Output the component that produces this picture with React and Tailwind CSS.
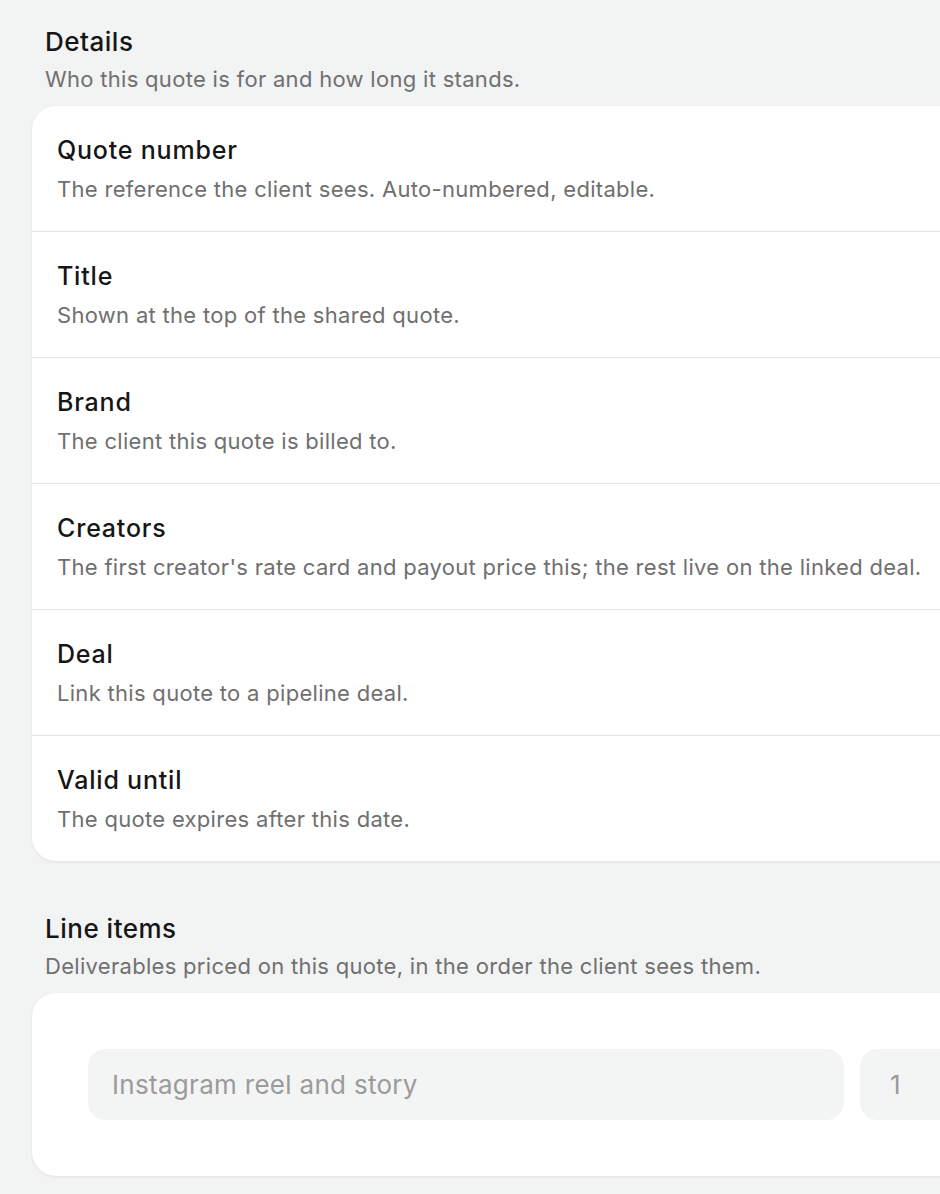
import React from "react";

const details = [
  { title: "Quote number", desc: "The reference the client sees. Auto-numbered, editable." },
  { title: "Title", desc: "Shown at the top of the shared quote." },
  { title: "Brand", desc: "The client this quote is billed to." },
  {
    title: "Creators",
    desc: "The first creator's rate card and payout price this; the rest live on the linked deal.",
  },
  { title: "Deal", desc: "Link this quote to a pipeline deal." },
  { title: "Valid until", desc: "The quote expires after this date." },
];

const SectionHeader = ({ title, desc }) => (
  <div className="pl-[13px] mb-[13px]">
    <h2 className="text-[26px] leading-8 font-medium tracking-[0.5px] text-[#161616]">
      {title}
    </h2>
    <p className="mt-[7px] text-[22px] leading-7 tracking-[0.3px] text-[#707070]">{desc}</p>
  </div>
);

const App = () => {
  return (
    <div
      className="w-[940px] h-[1194px] overflow-hidden bg-[#f2f3f3]"
      style={{ fontFamily: "Inter, 'Noto Sans', sans-serif" }}
    >
      <div className="w-[1100px] pl-8 pt-[26px]">
        <SectionHeader
          title="Details"
          desc="Who this quote is for and how long it stands."
        />
        <div className="bg-white rounded-[24px] shadow-[0_1px_3px_rgba(0,0,0,0.08)] overflow-hidden">
          {details.map((row, i) => (
            <div
              key={row.title}
              className={
                i < details.length - 1
                  ? "px-[25px] pt-7 pb-7 border-b border-[#e3e4e4]"
                  : "px-[25px] pt-7 pb-7"
              }
            >
              <div className="text-[25px] leading-8 font-medium tracking-[0.8px] text-[#161616]">
                {row.title}
              </div>
              <div className="mt-[9px] text-[22px] leading-7 tracking-[0.3px] text-[#6f6f6f] whitespace-nowrap">
                {row.desc}
              </div>
            </div>
          ))}
        </div>

        <div className="mt-[52px]">
          <SectionHeader
            title="Line items"
            desc="Deliverables priced on this quote, in the order the client sees them."
          />
          <div className="bg-white rounded-[24px] shadow-[0_1px_3px_rgba(0,0,0,0.08)] p-14">
            <div className="flex gap-4">
              <div className="w-[756px] h-[71px] rounded-[18px] bg-[#f3f4f4] flex items-center px-6 text-[26px] tracking-[0.3px] text-[#9b9b9b]">
                Instagram reel and story
              </div>
              <div className="w-[180px] h-[71px] rounded-[18px] bg-[#f3f4f4] flex items-center pl-[30px] text-[26px] text-[#9b9b9b]">
                1
              </div>
            </div>
          </div>
        </div>
      </div>
    </div>
  );
};

export default App;
